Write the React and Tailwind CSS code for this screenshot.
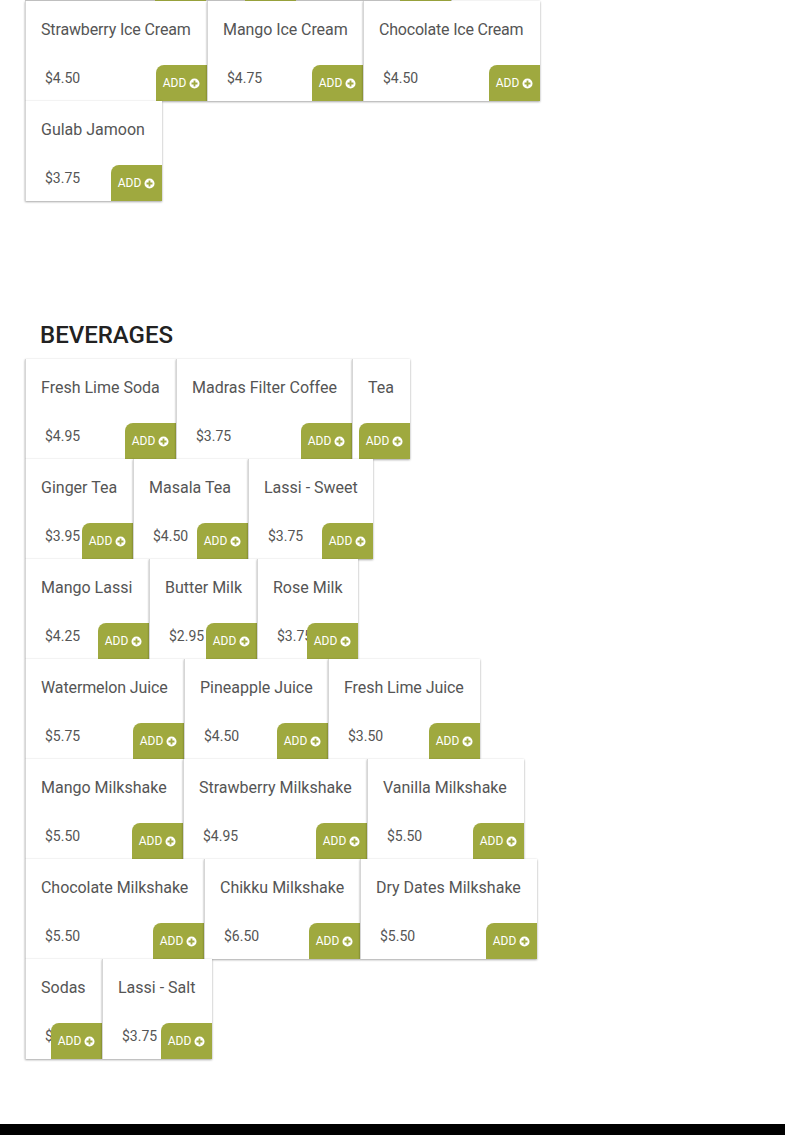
import React from "react";

function PlusCircle() {
  return (
    <svg viewBox="0 0 24 24" className="w-[11px] h-[11px] ml-[3px] fill-white" aria-hidden="true">
      <path fillRule="evenodd" d="M12 1a11 11 0 1 0 0 22 11 11 0 0 0 0-22zm-2 4.500h4V10h4.500v4H14v4.500h-4V14H5.500v-4H10z" />
    </svg>
  );
}

function Card({ name, price, width, tracking = "" }) {
  return (
    <div className={`relative h-[100px] shrink-0 bg-white px-4 pt-[17px] shadow-[inset_1px_0_0_#d6d6d6,0_1px_2px_rgba(0,0,0,0.32),0_0_2px_rgba(0,0,0,0.08)] ${width}`}>
      <div className={`text-[16px] leading-[24px] text-[#555] whitespace-nowrap ${tracking}`}>{name}</div>
      {price && <div className="mt-[26px] ml-1 text-[14px] leading-[20px] text-[#555]">{price}</div>}
      <button className="absolute right-0 bottom-0 w-[51px] h-9 flex items-center justify-center bg-[#9fa93f] text-white text-[12px] rounded-tl-lg">
        ADD
        <PlusCircle />
      </button>
    </div>
  );
}

function Row({ items }) {
  return (
    <div className="flex">
      {items.map(([n, p, w, t]) => (
        <Card key={n} name={n} price={p} width={w} tracking={t} />
      ))}
    </div>
  );
}

const beverages = [
  [["Fresh Lime Soda", "$4.95", "w-[151px]"], ["Madras Filter Coffee", "$3.75", "w-[176px]"], ["Tea", "", "w-[58px]"]],
  [["Ginger Tea", "$3.95", "w-[108px]"], ["Masala Tea", "$4.50", "w-[115px]"], ["Lassi - Sweet", "$3.75", "w-[125px]"]],
  [["Mango Lassi", "$4.25", "w-[124px]"], ["Butter Milk", "$2.95", "w-[108px]"], ["Rose Milk", "$3.75", "w-[101px]"]],
  [["Watermelon Juice", "$5.75", "w-[159px]", "tracking-[-0.12px]"], ["Pineapple Juice", "$4.50", "w-[144px]"], ["Fresh Lime Juice", "$3.50", "w-[152px]", "tracking-[-0.07px]"]],
  [["Mango Milkshake", "$5.50", "w-[158px]"], ["Strawberry Milkshake", "$4.95", "w-[184px]"], ["Vanilla Milkshake", "$5.50", "w-[157px]"]],
  [["Chocolate Milkshake", "$5.50", "w-[179px]", "tracking-[-0.05px]"], ["Chikku Milkshake", "$6.50", "w-[156px]"], ["Dry Dates Milkshake", "$5.50", "w-[177px]"]],
  [["Sodas", "$2.50", "w-[77px]"], ["Lassi - Salt", "$3.75", "w-[110px]"]],
];

export default function App() {
  return (
    <div className="h-[1135px] overflow-hidden bg-white font-['Roboto',sans-serif] flex flex-col">
      <div className="relative h-px shrink-0 ml-[25px] w-[427px] bg-[#c9c9c9]">
        <div className="absolute top-0 left-[130px] w-[51px] h-px bg-[#9fa93f]" />
        <div className="absolute top-0 left-[220px] w-[51px] h-px bg-[#9fa93f]" />
        <div className="absolute top-0 left-[375px] w-[51px] h-px bg-[#9fa93f]" />
      </div>
      <div className="pl-[25px]">
        <Row
          items={[
            ["Strawberry Ice Cream", "$4.50", "w-[182px]", "tracking-[-0.15px]"],
            ["Mango Ice Cream", "$4.75", "w-[156px]", "tracking-[-0.07px]"],
            ["Chocolate Ice Cream", "$4.50", "w-[177px]", "tracking-[-0.2px]"],
          ]}
        />
        <Row items={[["Gulab Jamoon", "$3.75", "w-[137px]"]]} />
      </div>
      <h2 className="mt-[118px] ml-10 h-10 text-[24px] leading-[32px] font-medium text-[#222]">BEVERAGES</h2>
      <div className="pl-[25px]">
        {beverages.map((r, i) => (
          <Row key={i} items={r} />
        ))}
      </div>
      <div className="mt-auto h-[11px] bg-black shrink-0" />
    </div>
  );
}
